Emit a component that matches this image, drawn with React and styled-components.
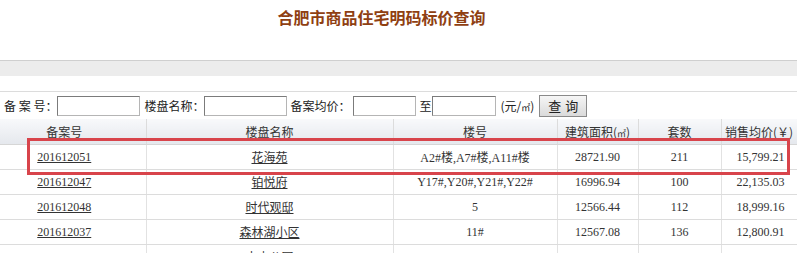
import React from 'react';
import styled, { createGlobalStyle } from 'styled-components';

const GlobalStyle = createGlobalStyle`
  html, body {
    margin: 0;
    padding: 0;
    background: #fff;
  }
  body {
    font-family: 'Liberation Serif', 'Noto Sans CJK SC', serif;
    font-size: 12px;
    color: #333;
  }
`;

const Page = styled.div`
  position: relative;
  width: 797px;
  height: 253px;
  overflow: hidden;
`;

const Title = styled.h1`
  margin: 0;
  height: 60px;
  padding: 7px 34px 0 0;
  box-sizing: border-box;
  text-align: center;
  font-family: 'Noto Sans CJK SC', sans-serif;
  font-size: 16px;
  line-height: 20px;
  font-weight: 700;
  color: #8f3f12;
`;

const Band = styled.div`
  height: 15px;
  border-top: 1px solid #cfcfcf;
  background: #ececec;
`;

const Gap = styled.div`
  height: 15px;
  border-bottom: 1px solid #dcdcdc;
`;

const SearchBar = styled.div`
  display: flex;
  align-items: center;
  height: 27px;
  padding-left: 4px;
  font-family: 'Noto Sans CJK SC', sans-serif;
  font-size: 12px;
  color: #222;
  white-space: pre;
`;

const Label = styled.span`
  margin-right: ${(p) => p.$mr ?? 0}px;
  margin-left: ${(p) => p.$ml ?? 0}px;
`;

const Field = styled.input`
  box-sizing: border-box;
  width: ${(p) => p.$w}px;
  height: 20px;
  margin: 0;
  padding: 0 2px;
  border: 1px solid #7b7b7b;
  border-right-color: #b5b5b5;
  border-bottom-color: #b5b5b5;
  background: #fff;
`;

const Unit = styled.span`
  margin: 0 5px 0 4px;
  font-size: 12px;
`;

const Sup = styled.span`
  font-size: 9px;
`;

const Button = styled.button`
  box-sizing: border-box;
  width: 48px;
  height: 22px;
  padding: 0;
  border: 1px solid #8a8a8a;
  background: linear-gradient(#f6f6f6, #dadada);
  font-family: 'Noto Sans CJK SC', sans-serif;
  font-size: 13px;
  letter-spacing: 4px;
  text-indent: 4px;
  color: #222;
`;

const Table = styled.table`
  width: 797px;
  table-layout: fixed;
  border-collapse: collapse;
`;

const Th = styled.th`
  height: 25px;
  padding: 0;
  padding-right: ${(p) => (p.$first ? 17 : 0)}px;
  background: linear-gradient(#f8f9fb, #e5e8ed);
  border-right: 1px solid #dcdcdc;
  border-bottom: 1px solid #d6d6d6;
  font-family: 'Noto Sans CJK SC', sans-serif;
  font-weight: 400;
  font-size: 12px;
  color: #333;
  text-align: center;
  white-space: nowrap;
  overflow: hidden;
`;

const Td = styled.td`
  height: 24px;
  padding: 0;
  padding-right: ${(p) => (p.$first ? 17 : p.$right ? 12 : 0)}px;
  border-right: 1px solid #e2e2e2;
  border-bottom: 1px solid #dcdcdc;
  text-align: ${(p) => (p.$right ? 'right' : 'center')};
  font-family: 'Liberation Serif', 'Noto Sans CJK SC', serif;
  font-size: 12px;
  color: #333;
  white-space: nowrap;
`;

const Link = styled.a`
  color: #333;
  text-decoration: underline;
  font-family: ${(p) => (p.$cjk ? "'Noto Sans CJK SC', sans-serif" : "'Liberation Serif', serif")};
`;

const Highlight = styled.div`
  position: absolute;
  left: 27px;
  top: 138px;
  width: 763px;
  height: 37px;
  box-sizing: border-box;
  border: 3px solid #d8444b;
  pointer-events: none;
`;

const columns = [
  { label: '备案号', width: 146 },
  { label: '楼盘名称', width: 247 },
  { label: '楼号', width: 164 },
  { label: <>建筑面积(<Sup>㎡</Sup>)</>, width: 81 },
  { label: '套数', width: 83 },
  { label: '销售均价(￥)', width: 76 },
];

const rows = [
  ['201612051', '花海苑', 'A2#楼,A7#楼,A11#楼', '28721.90', '211', '15,799.21'],
  ['201612047', '铂悦府', 'Y17#,Y20#,Y21#,Y22#', '16996.94', '100', '22,135.03'],
  ['201612048', '时代观邸', '5', '12566.44', '112', '18,999.16'],
  ['201612037', '森林湖小区', '11#', '12567.08', '136', '12,800.91'],
  ['201612039', '中央公园', '3#', '10425.30', '96', '14,020.55'],
];

export default function App() {
  return (
    <Page>
      <GlobalStyle />
      <Title>合肥市商品住宅明码标价查询</Title>
      <Band />
      <Gap />
      <SearchBar>
        <Label>备 案 号：</Label>
        <Field $w={83} />
        <Label $ml={4}>楼盘名称：</Label>
        <Field $w={83} />
        <Label $ml={3} $mr={3}>备案均价：</Label>
        <Field $w={63} />
        <Label $ml={3} $mr={1}>至</Label>
        <Field $w={64} />
        <Unit>(元/<Sup>㎡</Sup>)</Unit>
        <Button>查询</Button>
      </SearchBar>
      <Table>
        <colgroup>
          {columns.map((c, i) => (
            <col key={i} style={{ width: c.width }} />
          ))}
        </colgroup>
        <thead>
          <tr>
            {columns.map((c, i) => (
              <Th key={i} $first={i === 0}>{c.label}</Th>
            ))}
          </tr>
        </thead>
        <tbody>
          {rows.map((r) => (
            <tr key={r[0]}>
              <Td $first><Link href="#">{r[0]}</Link></Td>
              <Td><Link href="#" $cjk>{r[1]}</Link></Td>
              <Td>{r[2]}</Td>
              <Td>{r[3]}</Td>
              <Td>{r[4]}</Td>
              <Td $right>{r[5]}</Td>
            </tr>
          ))}
        </tbody>
      </Table>
      <Highlight />
    </Page>
  );
}
